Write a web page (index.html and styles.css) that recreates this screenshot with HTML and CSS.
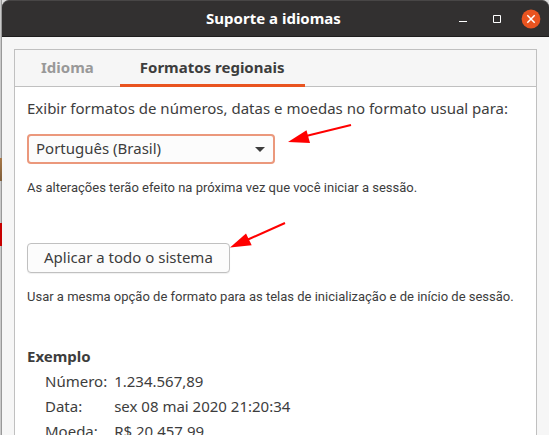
FILE: index.html
```html
<!DOCTYPE html>
<html lang="pt-BR">
<head>
<meta charset="utf-8">
<title>Suporte a idiomas</title>
<link rel="stylesheet" href="styles.css">
</head>
<body>
<div class="window">
  <header class="titlebar">
    <h1 class="title">Suporte a idiomas</h1>
    <div class="controls">
      <button class="control" type="button" aria-label="Minimizar"><svg width="20" height="20" viewBox="0 0 20 20"><path d="M6 12.5h8" stroke="#fff"/></svg></button>
      <button class="control" type="button" aria-label="Maximizar"><svg width="20" height="20" viewBox="0 0 20 20"><path d="M6.5 6.5h7v7h-7z" fill="none" stroke="#fff"/></svg></button>
      <button class="control" type="button" aria-label="Fechar"><svg width="20" height="20" viewBox="0 0 20 20"><circle cx="10" cy="10" r="9.4" fill="#e95420"/><path d="M6.3 6.3l7.4 7.4M13.7 6.3l-7.4 7.4" stroke="#fff" stroke-width="1.5"/></svg></button>
    </div>
  </header>
  <main class="notebook">
    <div class="tabs" role="tablist">
      <button class="tab" type="button" role="tab" aria-selected="false">Idioma</button>
      <button class="tab tab-active" type="button" role="tab" aria-selected="true">Formatos regionais</button>
    </div>
    <section class="panel">
      <label class="lead" for="format">Exibir formatos de números, datas e moedas no formato usual para:</label>
      <div class="combo">
        <select class="select" id="format"><option>Português (Brasil)</option></select>
        <svg class="caret" width="10" height="5" viewBox="0 0 10 5"><path d="M0 0h10L5 5z" fill="#3d3d3d"/></svg>
        <svg class="arrow arrow-select" width="64" height="22" viewBox="0 0 64 22"><path d="M63 2L18 13" stroke="#f00" stroke-width="2"/><path d="M0 19L18.500 7.200L22 20z" fill="#f00"/></svg>
      </div>
      <p class="note">As alterações terão efeito na próxima vez que você iniciar a sessão.</p>
      <div class="action">
        <button class="button" type="button">Aplicar a todo o sistema</button>
        <svg class="arrow arrow-button" width="57" height="28" viewBox="0 0 57 28"><path d="M55 2L18 18.500" stroke="#f00" stroke-width="2"/><path d="M0 26.500L16 12.500L21.700 24.300z" fill="#f00"/></svg>
      </div>
      <p class="note">Usar a mesma opção de formato para as telas de inicialização e de início de sessão.</p>
      <h2 class="heading">Exemplo</h2>
      <dl class="sample">
        <dt>Número:</dt><dd>1.234.567,89</dd>
        <dt>Data:</dt><dd>sex 08 mai 2020 21:20:34</dd>
        <dt>Moeda:</dt><dd>R$ 20.457,99</dd>
      </dl>
    </section>
  </main>
</div>
</body>
</html>
```
FILE: styles.css
```css
* { box-sizing: border-box; }
html, body { height: 100%; margin: 0; }
body {
  overflow: hidden;
  padding-left: 2px;
  color: #3d3d3d;
  font: 15px/24px "Noto Sans", "Open Sans", sans-serif;
  background:
    linear-gradient(#a87848, #80603c) 0 158px / 2px 23px no-repeat,
    linear-gradient(#c80000, #c80000) 0 223px / 2px 23px no-repeat,
    linear-gradient(90deg, #c9c9c9 1px, #999 1px 2px, #ddd 2px);
}
button, select { font: inherit; color: inherit; }
.window {
  display: flex;
  flex-direction: column;
  min-height: 100%;
  background: #f6f6f6;
  border-radius: 7px 7px 0 0;
}
.titlebar {
  display: grid;
  grid-template-columns: 1fr auto 1fr;
  align-items: center;
  height: 37px;
  padding: 0 8px 0 4px;
  color: #fff;
  background: #323030;
  border-top: 1px solid #484646;
  border-bottom: 1px solid #1e1d1d;
  border-radius: 7px 7px 0 0;
}
.title {
  grid-column: 2;
  margin: 0;
  padding-bottom: 2px;
  font-size: 15px;
  line-height: 24px;
}
.controls { display: flex; justify-content: flex-end; gap: 14px; }
.control {
  width: 20px;
  height: 20px;
  padding: 0;
  border: 0;
  background: none;
}
.control svg { display: block; }
.notebook {
  flex: 1;
  margin: 12px 12px 0;
  border: 1px solid #c0c0c0;
  border-bottom: 0;
  background: #fff;
}
.tabs {
  display: flex;
  height: 37px;
  background: #f6f6f6;
  box-shadow: inset 0 -1px #c0c0c0;
}
.tab {
  padding: 0 20px;
  border: 0;
  border-bottom: 3px solid transparent;
  background: none;
  color: #999;
  font-weight: 700;
}
.tab:first-child { padding: 0 26px; }
.tab-active { color: #3d3d3d; border-color: #e95420; }
.panel { padding: 9px 12px 12px; }
.lead { display: block; white-space: nowrap; }
.combo, .action { position: relative; width: max-content; }
.combo { margin-top: 14px; }
.action { margin-top: 45px; }
.select {
  display: block;
  appearance: none;
  width: 248px;
  height: 30px;
  padding: 0 30px 2px 7px;
  border: 2px solid #eb987c;
  border-radius: 4px;
  background: #fcfcfc;
  outline: 0;
}
.caret { position: absolute; right: 10px; top: 13px; pointer-events: none; }
.button {
  display: block;
  height: 30px;
  padding: 0 16px 2px;
  border: 1px solid #c0c0c0;
  border-radius: 4px;
  background: #fcfcfc;
  box-shadow: 0 1px 1px #00000010;
}
.arrow { position: absolute; left: 100%; pointer-events: none; }
.arrow-select { top: -11px; margin-left: 13px; }
.arrow-button { top: -22px; }
.note {
  margin: 14px 0 0;
  font: 13px/20px Roboto, sans-serif;
  white-space: nowrap;
}
.heading { margin: 37px 0 0; font-size: 15px; line-height: 25px; }
.sample {
  display: grid;
  grid-template-columns: max-content 1fr;
  column-gap: 7px;
  margin: 0 0 0 18px;
  line-height: 25px;
}
.sample dd { margin: 0; }
```
